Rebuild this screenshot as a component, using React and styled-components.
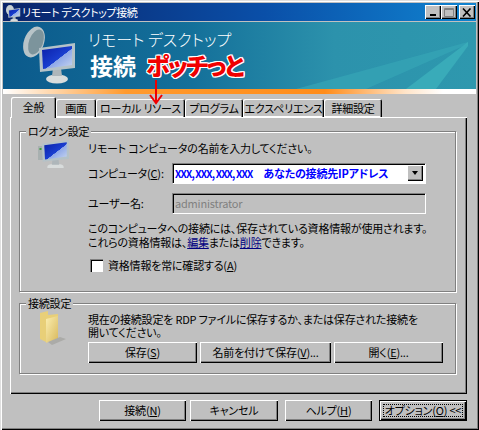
import styled, { createGlobalStyle, css } from 'styled-components'

const GlobalStyle = createGlobalStyle`
  html, body {
    margin: 0;
    padding: 0;
    background: #c0c0c0;
  }
  * {
    box-sizing: border-box;
  }
`

const raised = css`
  box-shadow: inset 1px 1px 0 #fff, inset -1px -1px 0 #000, inset -2px -2px 0 #808080;
`

const sunken = css`
  box-shadow: inset 1px 1px 0 #808080, inset 2px 2px 0 #000, 1px 1px 0 #fff;
`

const Window = styled.div`
  position: relative;
  width: 479px;
  height: 430px;
  padding: 3px;
  background: #c0c0c0;
  color: #000;
  font-family: "Noto Sans CJK JP", "Liberation Sans", sans-serif;
  font-size: 11px;
  font-feature-settings: "palt";
  letter-spacing: -0.2px;
  line-height: 13px;
  box-shadow: inset 1px 1px 0 #dfdfdf, inset 2px 2px 0 #fff, inset -1px -1px 0 #000, inset -2px -2px 0 #808080;
  overflow: hidden;
`

const TitleBar = styled.div`
  display: flex;
  align-items: center;
  height: 18px;
  padding: 0 1px 0 2px;
  background: linear-gradient(90deg, #0a246a, #0a4fa8 55%, #1084d0);
  color: #fff;
`

const TitleText = styled.span`
  flex: 1;
  margin-left: 1px;
  font-size: 11px;
  letter-spacing: -0.4px;
`

const TitleButton = styled.button`
  display: flex;
  align-items: center;
  justify-content: center;
  width: 16px;
  height: 14px;
  margin-left: ${props => (props.$gap ? '2px' : '0')};
  padding: 0;
  border: none;
  background: #c0c0c0;
  ${raised}
`

const Banner = styled.div`
  position: relative;
  display: flex;
  height: 67px;
  margin-top: 1px;
  padding-left: 19px;
  background: linear-gradient(90deg, #0b5a8c, #14709a 40%, #2c92ac 70%, #2e98ae);
  overflow: hidden;
`

const Rays = styled.svg`
  position: absolute;
  top: 0;
  right: 0;
`

const BannerLogo = styled.svg`
  flex: none;
  margin-top: 4px;
`

const BannerText = styled.div`
  display: flex;
  flex-direction: column;
  margin-left: 4px;
  color: #fff;
`

const BannerTitle = styled.span`
  margin-top: 6px;
  font-size: 16px;
  font-weight: 300;
  letter-spacing: 0;
  line-height: 22px;
  white-space: pre;
`

const BannerBold = styled.span`
  margin-top: 2px;
  margin-left: 2px;
  font-size: 23px;
  font-weight: 700;
  letter-spacing: 0;
  line-height: 26px;
`

const Callout = styled.span`
  position: absolute;
  left: 143px;
  top: 28px;
  color: #f00000;
  font-size: 24px;
  font-weight: 900;
  line-height: 30px;
  letter-spacing: -1.8px;
  text-shadow: 1px 0 #fff, -1px 0 #fff, 0 1px #fff, 0 -1px #fff, 1px 1px #fff, -1px -1px #fff, 1px -1px #fff, -1px 1px #fff;
`

const CalloutArrow = styled.svg`
  position: absolute;
  left: 148px;
  top: 80px;
  z-index: 3;
`

const Strip = styled.div`
  height: 5px;
  background: linear-gradient(90deg, #fff, #ff9a2e 26%, #ff8c1a 68%, #ffe4c8 85%, #fff 93%);
`

const Body = styled.div`
  padding: 3px 9px 0 7px;
`

const TabRow = styled.div`
  display: flex;
  align-items: flex-end;
  height: 20px;
  padding-left: 1px;
`

const Tab = styled.div`
  position: relative;
  display: flex;
  align-items: center;
  justify-content: center;
  flex: none;
  width: ${props => props.$width}px;
  height: ${props => (props.$active ? 21 : 18)}px;
  margin-bottom: ${props => (props.$active ? '-1px' : '0')};
  background: #c0c0c0;
  white-space: pre;
  z-index: ${props => (props.$active ? 2 : 0)};
  border-radius: 2px 2px 0 0;
  box-shadow: ${props => (props.$active
    ? 'inset 1px 1px 0 #fff, inset -1px 0 0 #000, inset -2px 0 0 #808080'
    : 'inset 1px 1px 0 #fff, inset -1px 0 0 #000, inset -2px 0 0 #808080, inset 0 -1px 0 #fff')};
`

const TabPanel = styled.div`
  display: flex;
  flex-direction: column;
  height: 277px;
  padding: 7px 11px 0 9px;
  ${raised}
`

const Group = styled.fieldset`
  min-width: 0;
  height: ${props => props.$height}px;
  margin: 0 0 ${props => props.$after}px;
  padding: 0;
  border: 1px solid #808080;
  box-shadow: 1px 1px 0 #fff, inset 1px 1px 0 #fff;
`

const Legend = styled.legend`
  margin-left: 6px;
  padding: 0 2px;
  background: #c0c0c0;
  line-height: 14px;
`

const GroupBody = styled.div`
  display: grid;
  grid-template-columns: 68px 1fr;
`

const GroupIcon = styled.svg`
  margin-left: 18px;
  margin-top: ${props => props.$top}px;
`

const Content = styled.div`
  display: flex;
  flex-direction: column;
  padding-top: ${props => props.$top}px;
`

const Line = styled.div`
  white-space: pre;
`

const FieldRow = styled.div`
  display: grid;
  grid-template-columns: 84px 253px;
  align-items: center;
  height: 20px;
  margin-top: ${props => props.$top}px;
  color: #000;
  white-space: pre;
`

const Combo = styled.div`
  display: flex;
  align-items: center;
  height: 20px;
  padding: 0 2px 0 3px;
  background: #fff;
  gap: 11px;
  ${sunken}
`

const ComboValue = styled.span`
  color: #0000ff;
  font-size: ${props => props.$size}px;
  font-weight: 700;
  letter-spacing: ${props => props.$spacing}px;
  white-space: pre;
`

const ComboArrow = styled.span`
  display: flex;
  align-items: center;
  justify-content: center;
  width: 16px;
  height: 16px;
  margin-left: auto;
  background: #c0c0c0;
  ${raised}
  &::before {
    content: '';
    border-left: 3.5px solid transparent;
    border-right: 3.5px solid transparent;
    border-top: 4px solid #000;
  }
`

const DisabledInput = styled.div`
  display: flex;
  align-items: center;
  height: 20px;
  padding-left: 3px;
  color: #808080;
  background: #c0c0c0;
  ${sunken}
`

const Paragraph = styled.div`
  margin-top: ${props => props.$top}px;
  line-height: ${props => props.$leading}px;
  white-space: pre;
`

const Link = styled.a`
  color: #000080;
  text-decoration: underline;
`

const CheckRow = styled.label`
  display: flex;
  align-items: center;
  gap: 5px;
  margin-top: 10px;
  margin-left: 2px;
`

const CheckBox = styled.span`
  width: 13px;
  height: 13px;
  background: #fff;
  box-shadow: inset 1px 1px 0 #808080, inset 2px 2px 0 #000, inset -1px -1px 0 #fff;
`

const ButtonRow = styled.div`
  display: flex;
  margin-top: ${props => props.$top}px;
  gap: ${props => props.$gap}px;
`

const Button = styled.button`
  display: flex;
  align-items: center;
  justify-content: center;
  flex: none;
  width: ${props => props.$width}px;
  height: 21px;
  margin-left: ${props => props.$left || 0}px;
  padding: 0;
  border: none;
  background: #c0c0c0;
  color: #000;
  font: inherit;
  font-feature-settings: inherit;
  letter-spacing: inherit;
  white-space: pre;
  ${raised}
  ${props => props.$default && css`
    position: relative;
    outline: 1px solid #000;
    outline-offset: -1px;
    box-shadow: inset 2px 2px 0 #fff, inset -2px -2px 0 #000, inset -3px -3px 0 #808080;
    &::after {
      content: '';
      position: absolute;
      inset: 4px;
      border: 1px dotted #000;
    }
  `}
`

const Accel = styled.span`
  text-decoration: underline;
`

const Footer = styled.div`
  display: flex;
  margin-top: 6px;
  padding-left: 89px;
`

function Monitor({ id, x = 0, y = 0, scale = 1 }) {
  return (
    <g transform={`translate(${x} ${y}) scale(${scale})`}>
      <defs>
        <linearGradient id={id} x1="0" y1="0" x2="1" y2="1">
          <stop offset="0" stopColor="#0a1fa8" />
          <stop offset="0.55" stopColor="#1a3fd0" />
          <stop offset="0.56" stopColor="#8ea8e8" />
          <stop offset="1" stopColor="#c8d6f0" />
        </linearGradient>
      </defs>
      <ellipse cx="18" cy="36" rx="11" ry="4.5" fill="#d8dcdc" />
      <path d="M14 25h8l1 8h-10z" fill="#aeb6ba" />
      <path d="M0 5 L36 0 L36 25 L1 29 Z" fill="#b4c2c8" />
      <path d="M3 7 L33 3 L33 22 L4 26 Z" fill={`url(#${id})`} />
    </g>
  )
}

function Dish() {
  return (
    <g>
      <ellipse cx="12" cy="15" rx="10" ry="16" transform="rotate(20 12 15)" fill="#b8c4c8" />
      <ellipse cx="14" cy="15" rx="7" ry="13" transform="rotate(20 14 15)" fill="#7c949c" />
    </g>
  )
}

function App() {
  return (
    <>
      <GlobalStyle />
      <Window>
        <TitleBar>
          <svg width="16" height="17" viewBox="0 0 16 17">
            <ellipse cx="5" cy="6" rx="4" ry="5" fill="#c8d0d4" />
            <Monitor id="titleScreen" x={3} y={4} scale={0.34} />
          </svg>
          <TitleText>リモート デスクトップ接続</TitleText>
          <TitleButton aria-label="最小化">
            <svg width="10" height="9" viewBox="0 0 10 9"><rect x="2" y="6" width="6" height="2" fill="#000" /></svg>
          </TitleButton>
          <TitleButton aria-label="最大化">
            <svg width="10" height="9" viewBox="0 0 10 9"><path d="M0.5 0.5h9v8h-9z M0.5 1.5h9" fill="none" stroke="#808080" /></svg>
          </TitleButton>
          <TitleButton $gap aria-label="閉じる">
            <svg width="10" height="9" viewBox="0 0 10 9"><path d="M1 0.5L8.5 8.5M8.5 0.5L1 8.5" stroke="#000" strokeWidth="1.6" /></svg>
          </TitleButton>
        </TitleBar>
        <Banner>
          <Rays width="240" height="67" viewBox="0 0 240 67">
            <path d="M232 20 L60 67 L130 67 L232 22 Z" fill="#36a4b6" opacity="0.75" />
            <path d="M232 20 L170 67 L200 67 L232 24 Z" fill="#3cb0bc" opacity="0.8" />
          </Rays>
          <BannerLogo width="62" height="62" viewBox="0 0 62 62">
            <g transform="translate(0 1)"><Dish /></g>
            <Monitor id="bannerScreen" x={17} y={17} scale={1} />
          </BannerLogo>
          <BannerText>
            <BannerTitle>リモート デスクトップ</BannerTitle>
            <BannerBold>接続</BannerBold>
          </BannerText>
          <Callout>ポッチっと</Callout>
        </Banner>
        <Strip />
        <Body>
          <TabRow>
            <Tab $active $width={45}>全般</Tab>
            <Tab $width={40}>画面</Tab>
            <Tab $width={89}>ローカル リソース</Tab>
            <Tab $width={58}>プログラム</Tab>
            <Tab $width={81}>エクスペリエンス</Tab>
            <Tab $width={58}>詳細設定</Tab>
          </TabRow>
          <TabPanel>
            <Group $height={168} $after={4}>
              <Legend>ログオン設定</Legend>
              <GroupBody>
                <GroupIcon $top={0} width="32" height="30" viewBox="0 0 32 30">
                  <rect x="0" y="8" width="5" height="14" fill="#a8b0b0" />
                  <rect x="1.5" y="10" width="2" height="2" fill="#3ca03c" />
                  <Monitor id="groupScreen" x={4} y={2} scale={0.75} />
                </GroupIcon>
                <Content $top={4}>
                  <Line>リモート コンピュータの名前を入力してください。</Line>
                  <FieldRow $top={8}>
                    <span>コンピュータ(<Accel>C</Accel>):</span>
                    <Combo>
                      <ComboValue $size={10} $spacing={-0.8}>XXX, XXX, XXX, XXX</ComboValue>
                      <ComboValue $size={11} $spacing={-0.2}>あなたの接続先IPアドレス</ComboValue>
                      <ComboArrow />
                    </Combo>
                  </FieldRow>
                  <FieldRow $top={10}>
                    <span>ユーザー名:</span>
                    <DisabledInput>administrator</DisabledInput>
                  </FieldRow>
                  <Paragraph $top={8} $leading={14}>
                    {'このコンピュータへの接続には、保存されている資格情報が使用されます。\nこれらの資格情報は、'}
                    <Link>編集</Link>または<Link>削除</Link>できます。
                  </Paragraph>
                  <CheckRow>
                    <CheckBox />
                    <span>資格情報を常に確認する(<Accel>A</Accel>)</span>
                  </CheckRow>
                </Content>
              </GroupBody>
            </Group>
            <Group $height={78} $after={0}>
              <Legend>接続設定</Legend>
              <GroupBody>
                <GroupIcon $top={1} width="30" height="34" viewBox="0 0 30 34">
                  <defs>
                    <linearGradient id="folderFill" x1="0" y1="0" x2="1" y2="1">
                      <stop offset="0" stopColor="#fbeeb0" />
                      <stop offset="1" stopColor="#d8b85c" />
                    </linearGradient>
                  </defs>
                  <path d="M2 2 L10 0 L10 4 L20 3 L20 26 L8 31 L2 28 Z" fill="#e8cf78" />
                  <path d="M8 8 L20 5 L20 27 L8 32 Z" fill="url(#folderFill)" />
                  <path d="M10 31 L22 26 L28 28 L14 34 Z" fill="#9c9c98" opacity="0.6" />
                </GroupIcon>
                <Content $top={3}>
                  <Paragraph $top={0} $leading={13}>
                    {'現在の接続設定を RDP ファイルに保存するか、または保存された接続を\n開いてください。'}
                  </Paragraph>
                  <ButtonRow $top={3} $gap={3}>
                    <Button $width={109}>保存(<Accel>S</Accel>)</Button>
                    <Button $width={131}>名前を付けて保存(<Accel>V</Accel>)...</Button>
                    <Button $width={109}>開く(<Accel>E</Accel>)...</Button>
                  </ButtonRow>
                </Content>
              </GroupBody>
            </Group>
          </TabPanel>
          <Footer>
            <Button $width={87}>接続(<Accel>N</Accel>)</Button>
            <Button $width={88} $left={4}>キャンセル</Button>
            <Button $width={87} $left={7}>ヘルプ(<Accel>H</Accel>)</Button>
            <Button $default $width={88} $left={7}>オプション(<Accel>O</Accel>) &lt;&lt;</Button>
          </Footer>
        </Body>
        <CalloutArrow width="16" height="25" viewBox="0 0 16 25">
          <path d="M8 0 V22 M2 15 L8 23 L14 15" fill="none" stroke="#f00000" strokeWidth="2" />
        </CalloutArrow>
      </Window>
    </>
  )
}

export default App
